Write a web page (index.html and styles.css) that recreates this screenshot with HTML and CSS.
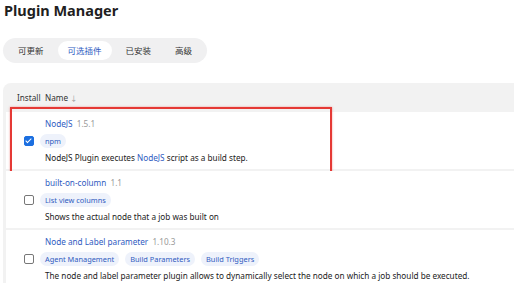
FILE: index.html
```html
<!DOCTYPE html>
<html lang="zh-CN">
<head>
  <meta charset="UTF-8">
  <meta name="viewport" content="width=device-width, initial-scale=1.0">
  <title>Plugin Manager</title>
  <link rel="stylesheet" href="styles.css">
</head>
<body>
  <h1 class="title">Plugin Manager</h1>

  <div class="tabs">
    <span class="tab">可更新</span>
    <span class="tab active">可选插件</span>
    <span class="tab">已安装</span>
    <span class="tab">高级</span>
  </div>

  <div class="plugins">
    <div class="plugins-head">
      <span class="col-install">Install</span>
      <span class="col-name">Name <span class="sort">↓</span></span>
    </div>

    <div class="plugin picked">
      <div class="col-install"><span class="check on"></span></div>
      <div class="col-name">
        <div class="plugin-name"><a>NodeJS</a> <span class="ver">1.5.1</span></div>
        <div class="tags"><span class="tag">npm</span></div>
        <div class="desc">NodeJS Plugin executes <a>NodeJS</a> script as a build step.</div>
      </div>
      <!-- highlight around the chosen plugin -->
      <div class="mark"></div>
    </div>

    <div class="plugin">
      <div class="col-install"><span class="check"></span></div>
      <div class="col-name">
        <div class="plugin-name"><a>built-on-column</a> <span class="ver">1.1</span></div>
        <div class="tags"><span class="tag">List view columns</span></div>
        <div class="desc">Shows the actual node that a job was built on</div>
      </div>
    </div>

    <div class="plugin">
      <div class="col-install"><span class="check"></span></div>
      <div class="col-name">
        <div class="plugin-name"><a>Node and Label parameter</a> <span class="ver">1.10.3</span></div>
        <div class="tags">
          <span class="tag">Agent Management</span>
          <span class="tag">Build Parameters</span>
          <span class="tag">Build Triggers</span>
        </div>
        <div class="desc">The node and label parameter plugin allows to dynamically select the node on which a job should be executed.</div>
      </div>
    </div>
  </div>
</body>
</html>
```

FILE: styles.css
```css
body {
  margin: 0;
  padding: 0 0 0 3px;
  font-family: "Noto Sans", "Noto Sans CJK SC", sans-serif;
  color: #222;
  background: #fff;
  overflow: hidden;
  height: 283px;
}
a { color: #2f5bbf; }

.title {
  margin: 0;
  padding: 1px 0 0 1px;
  font-size: 14.5px;
  font-weight: 700;
  line-height: 18px;
  color: #1f1f1f;
}

.tabs {
  display: inline-flex;
  align-items: center;
  gap: 4px;
  margin-top: 19px;
  padding: 3px 5px;
  background: #f0f0f1;
  border-radius: 13px;
}
.tab {
  font-size: 8.5px;
  line-height: 19px;
  padding: 0 10px;
  color: #333;
  border-radius: 10px;
}
.tab.active {
  background: #fff;
  color: #2f5bbf;
}

.plugins {
  margin-top: 20px;
  background: #f2f2f2;
  border-top-left-radius: 8px;
  padding-left: 3px;
}
.plugins-head {
  display: flex;
  align-items: center;
  height: 29px;
  font-size: 8.2px;
  color: #333;
}
.plugins-head .col-install { padding-left: 11px; }
.plugins-head .col-name { padding-left: 5px; }
.sort { color: #999; font-size: 7px; }

.col-install {
  box-sizing: border-box;
  width: 34px;
  flex: none;
}
.col-name { flex: 1; }

.plugin {
  position: relative;
  display: flex;
  background: #fff;
  margin-bottom: 2px;
  padding: 5px 0 4px;
}
.plugin .col-install {
  display: flex;
  align-items: center;
  padding-left: 18px;
}
.plugin-name {
  font-size: 8.2px;
  line-height: 14px;
  padding-left: 5px;
}
.ver { color: #999; margin-left: 2px; }

.tags {
  display: flex;
  gap: 6px;
  margin: 3px 0 3px;
}
.tag {
  font-size: 7.4px;
  line-height: 14px;
  padding: 0 5px;
  background: #eef2fb;
  color: #2f5bbf;
  border-radius: 7px;
}
.desc {
  font-size: 8.2px;
  line-height: 14px;
  padding-left: 5px;
  color: #222;
  white-space: nowrap;
}

.check {
  flex: none;
  width: 8px;
  height: 8px;
  border: 1px solid #777;
  border-radius: 2px;
  background: #fff;
  position: relative;
}
.check.on {
  background: #1c6fe0;
  border-color: #1c6fe0;
}
.check.on::after {
  content: "";
  position: absolute;
  left: 2px;
  top: 0;
  width: 2px;
  height: 5px;
  border: solid #fff;
  border-width: 0 1.5px 1.5px 0;
  transform: rotate(45deg);
}

.mark {
  position: absolute;
  left: 4px;
  top: -5px;
  width: 318px;
  height: 65px;
  border: 2px solid #e53935;
  box-shadow: 0 0 2px rgba(229, 57, 53, 0.5);
  pointer-events: none;
}
```
